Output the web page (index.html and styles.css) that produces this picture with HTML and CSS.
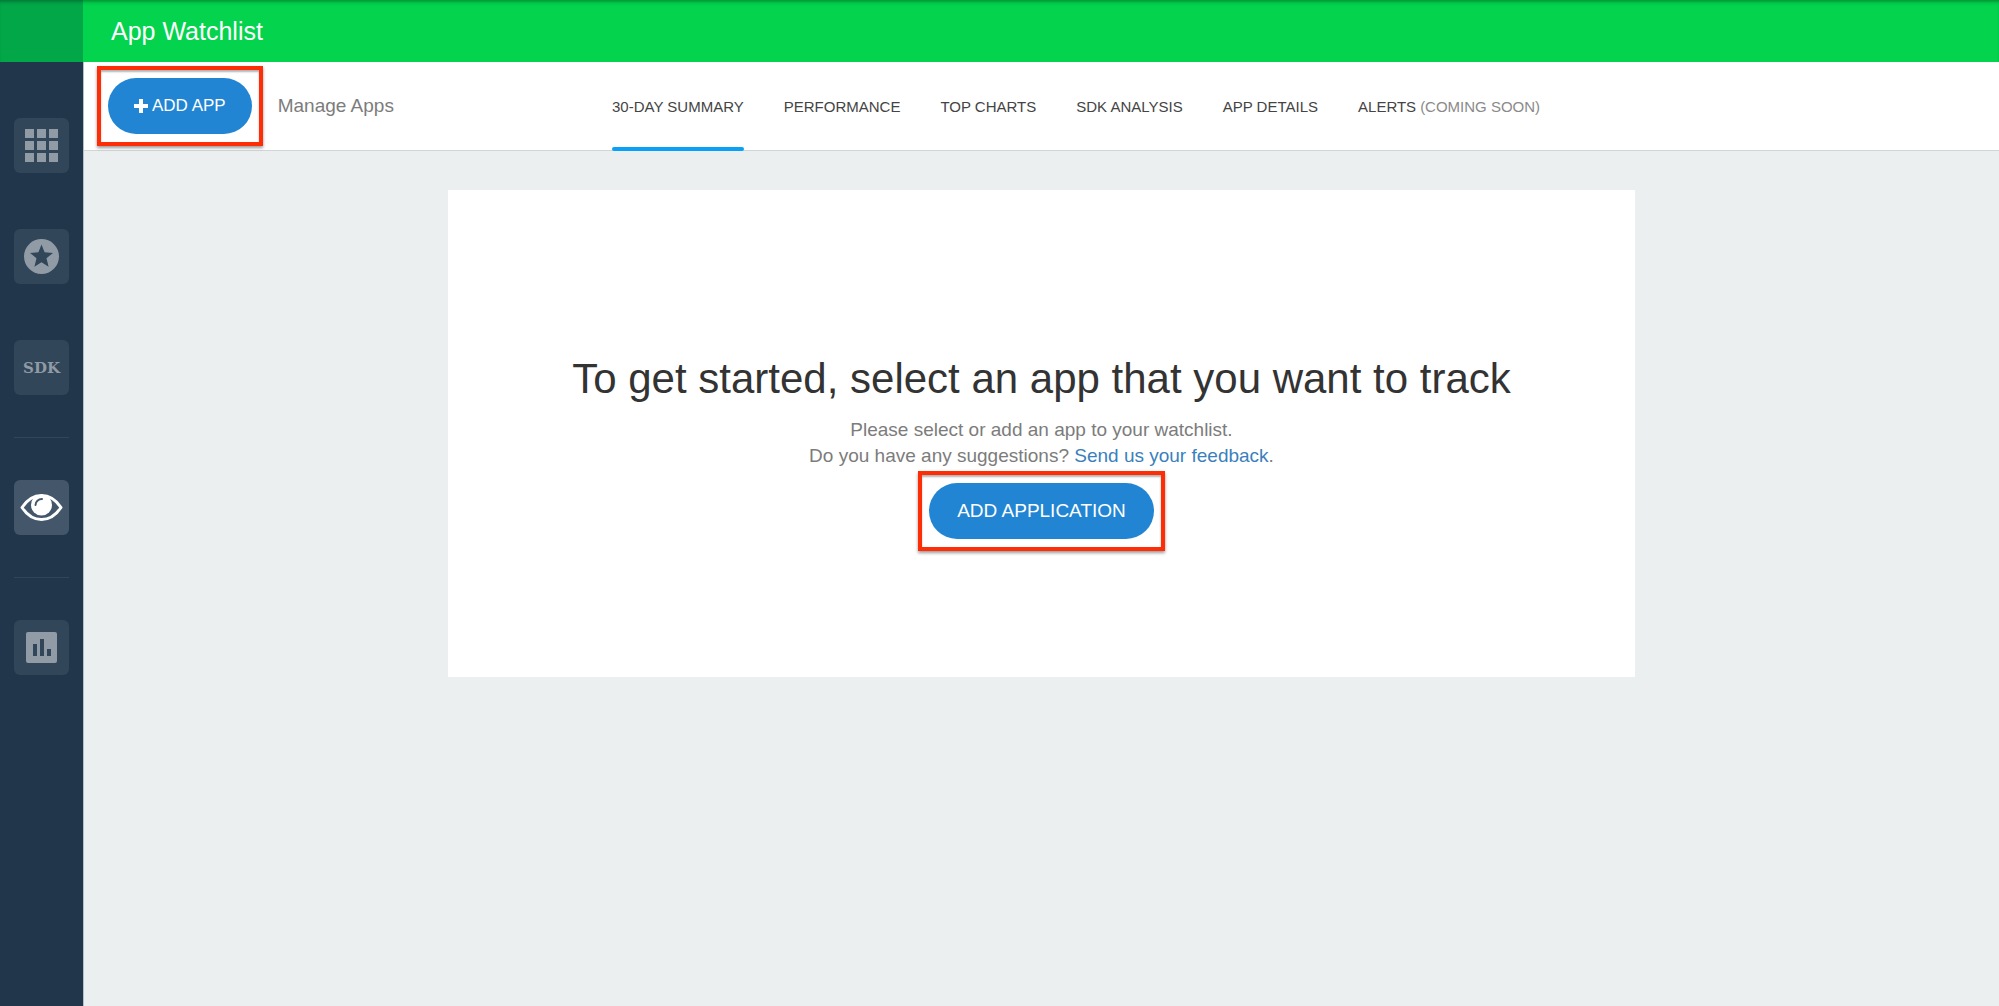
FILE: index.html
```html
<!DOCTYPE html>
<html lang="en">
<head>
    <meta charset="utf-8" />
    <title>App Watchlist</title>
    <link rel="stylesheet" href="styles.css">
</head>
<body>
    <div class="app">
        <header class="header">
            <div class="header-corner"></div>
            <h1 class="header-title">App Watchlist</h1>
        </header>

        <nav class="sidebar" aria-label="Main">
            <a class="side-link" href="#apps" aria-label="Apps">
                <svg width="55" height="55" viewBox="0 0 55 55">
                    <path d="M11 11h9v9h-9zM23 11h9v9h-9zM35 11h9v9h-9zM11 23h9v9h-9zM23 23h9v9h-9zM35 23h9v9h-9zM11 35h9v9h-9zM23 35h9v9h-9zM35 35h9v9h-9z" />
                </svg>
            </a>
            <a class="side-link" href="#top" aria-label="Top charts">
                <svg width="55" height="55" viewBox="0 0 55 55">
                    <path fill-rule="evenodd" d="M27.500 10a17.500 17.500 0 1 0 0 35a17.500 17.500 0 0 0 0-35zM27.500 15.500L30.600 23.300L39 23.900L32.500 29.200L34.600 37.800L27.500 33.200L20.400 37.800L22.500 29.200L16 23.900L24.400 23.300z" />
                </svg>
            </a>
            <a class="side-link side-sdk" href="#sdk">SDK</a>
            <hr class="side-line">
            <a class="side-link active" href="#watchlist" aria-label="Watchlist">
                <svg width="55" height="55" viewBox="0 0 55 55">
                    <path class="eye-outline" d="M8 27.500C13 20 20 15.500 27.500 15.500S42 20 47 27.500C42 35 35 39.500 27.500 39.500S13 35 8 27.500z" />
                    <circle cx="27.500" cy="25" r="10.500" />
                    <path class="eye-shine" d="M21.500 25C21.500 21.500 24.500 19 28 19" />
                </svg>
            </a>
            <hr class="side-line">
            <a class="side-link" href="#reports" aria-label="Reports">
                <svg width="55" height="55" viewBox="0 0 55 55">
                    <path fill-rule="evenodd" d="M14 12h27a2 2 0 0 1 2 2v27a2 2 0 0 1-2 2H14a2 2 0 0 1-2-2V14a2 2 0 0 1 2-2zM19 24v12h4V24zM26 19v17h4V19zM33 29v7h4v-7z" />
                </svg>
            </a>
        </nav>

        <div class="main">
            <div class="toolbar">
                <div class="toolbar-left">
                    <div class="highlight">
                        <button class="btn btn-small" type="button">
                            <svg width="14" height="14" viewBox="0 0 14 14"><path d="M5 0h4v5h5v4H9v5H5V9H0V5h5z" /></svg>
                            ADD APP
                        </button>
                    </div>
                    <a class="manage" href="#manage">Manage Apps</a>
                </div>
                <nav class="tabs" aria-label="Watchlist views">
                    <a class="tab selected" href="#summary">30-DAY SUMMARY</a>
                    <a class="tab" href="#performance">PERFORMANCE</a>
                    <a class="tab" href="#charts">TOP CHARTS</a>
                    <a class="tab" href="#analysis">SDK ANALYSIS</a>
                    <a class="tab" href="#details">APP DETAILS</a>
                    <a class="tab" href="#alerts">ALERTS <span class="soon">(COMING SOON)</span></a>
                </nav>
            </div>

            <main class="card">
                <h2>To get started, select an app that you want to track</h2>
                <p>
                    Please select or add an app to your watchlist.<br>
                    Do you have any suggestions? <a href="#feedback">Send us your feedback</a>.
                </p>
                <div class="highlight">
                    <button class="btn" type="button">ADD APPLICATION</button>
                </div>
            </main>
        </div>
    </div>
</body>
</html>
```

FILE: styles.css
```css
* {
    box-sizing: border-box;
}

body {
    margin: 0;
    background: #ebeff0;
    color: #7c7c7c;
    font-family: "Liberation Sans", Arial, sans-serif;
    font-size: 19px;
}

a {
    color: inherit;
    text-decoration: none;
}

.app {
    display: grid;
    grid-template-columns: 84px 1fr;
    grid-template-rows: 62px 1fr;
    min-height: 100vh;
}

/* Header */
.header {
    grid-column: 1 / -1;
    display: flex;
    align-items: center;
    background: #03d34d;
    box-shadow: inset 0 4px 4px -3px rgba(0, 60, 20, 0.6);
}

.header-corner {
    width: 83px;
    height: 100%;
    background: rgba(0, 50, 60, 0.27);
}

.header-title {
    margin: 0 0 0 28px;
    color: white;
    font-size: 25px;
    font-weight: normal;
}

/* Sidebar */
.sidebar {
    display: flex;
    flex-direction: column;
    align-items: center;
    padding-top: 56px;
    background: #22364b;
    border-right: 1px solid #b4bfc7;
}

.side-link {
    display: flex;
    align-items: center;
    justify-content: center;
    width: 55px;
    height: 55px;
    background: #32465a;
    border-radius: 6px;
    color: #909ba6;
}

.side-link + .side-link {
    margin-top: 56px;
}

.side-link svg {
    fill: currentColor;
}

.side-link.active {
    background: #43566a;
    color: white;
}

.side-sdk {
    font-family: "DejaVu Serif", serif;
    font-size: 15px;
    font-weight: bold;
}

.side-line {
    width: 55px;
    height: 1px;
    margin: 42px 0;
    border: none;
    background: #32465a;
}

.eye-outline {
    fill: none;
    stroke: currentColor;
    stroke-width: 3;
    stroke-linejoin: round;
}

.eye-shine {
    fill: none;
    stroke: #43566a;
    stroke-width: 2;
    stroke-linecap: round;
}

/* Toolbar */
.main {
    display: flex;
    flex-direction: column;
    align-items: center;
    min-width: 0;
}

.toolbar {
    display: flex;
    align-self: stretch;
    height: 89px;
    background: white;
    border-bottom: 1px solid #d3d6d7;
}

.toolbar-left {
    display: flex;
    align-items: center;
    gap: 15px;
    width: 528px;
    padding-left: 13px;
    white-space: nowrap;
}

.tabs {
    display: flex;
    gap: 40px;
    white-space: nowrap;
}

.tab {
    display: flex;
    align-items: center;
    gap: 4px;
    height: 89px;
    color: #444;
    font-size: 15px;
}

.tab.selected {
    position: relative;
}

.tab.selected::after {
    content: "";
    position: absolute;
    right: 0;
    bottom: 0;
    left: 0;
    height: 4px;
    background: #09a0f6;
    border-radius: 2px;
}

.soon {
    color: #8a8a8a;
}

/* Buttons */
.highlight {
    padding: 8px 7px;
    border: 4px solid #ff2d06;
    box-shadow: 0 2px 3px rgba(0, 0, 0, 0.4), inset 0 2px 2px rgba(0, 0, 0, 0.3);
}

.btn {
    display: flex;
    align-items: center;
    justify-content: center;
    gap: 4px;
    height: 56px;
    padding: 0 28px;
    background: #2185d4;
    border: none;
    border-radius: 28px;
    color: white;
    font-family: inherit;
    font-size: 19px;
    cursor: pointer;
}

.btn svg {
    fill: white;
}

.btn-small {
    padding: 0 26px;
    font-size: 17px;
}

/* Empty state */
.card {
    display: flex;
    flex-direction: column;
    align-items: center;
    width: 62%;
    margin-top: 39px;
    padding: 164px 24px 126px;
    background: white;
    text-align: center;
}

.card h2 {
    margin: 0;
    color: #333;
    font-size: 42px;
    font-weight: normal;
    line-height: 50px;
}

.card p {
    margin: 13px 0 0;
    line-height: 26px;
}

.card p a {
    color: #3b7fbd;
}

.card .highlight {
    margin-top: 2px;
}
```
